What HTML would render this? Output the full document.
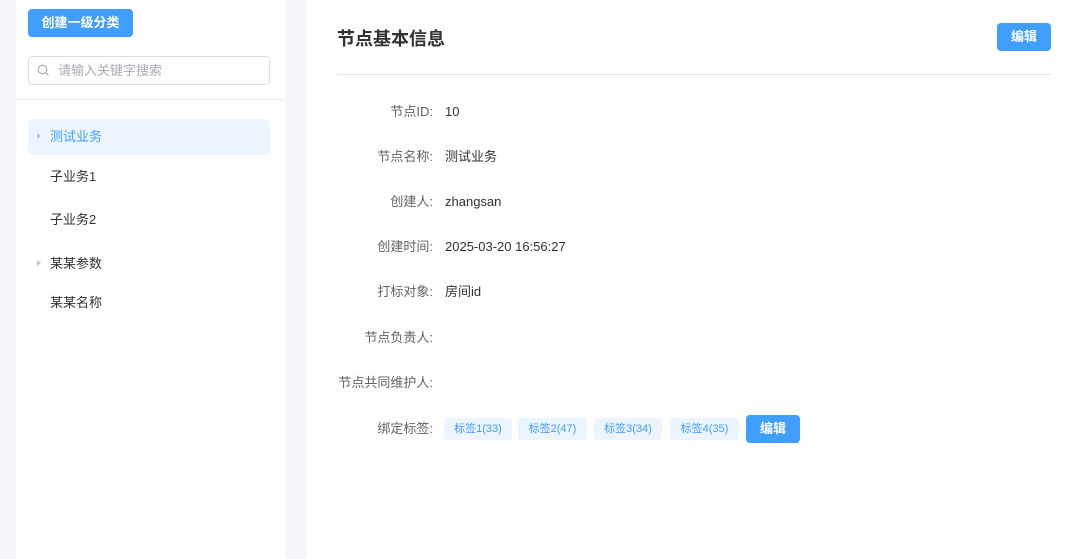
<!DOCTYPE html>
<html><head><meta charset="utf-8"><style>
*{margin:0;padding:0;box-sizing:border-box}
body{width:1080px;height:559px;overflow:hidden;background:#f5f7fa;font-family:"Liberation Sans","Noto Sans CJK SC",sans-serif;position:relative;color:#303133;line-height:18px}
.abs{position:absolute}
.left{left:16px;top:0;width:269px;height:559px;background:#fff}
.right{left:307px;top:0;width:773px;height:559px;background:#fff}
.btn{background:#409eff;color:#fff;font-size:13px;font-weight:bold;border-radius:4px;display:flex;align-items:center;justify-content:center}
.item{font-size:13px;color:#303133;left:50px}
.lab{width:120px;left:313px;text-align:right;font-size:13px;color:#606266}
.val{left:445px;font-size:13px;color:#303133}
.tag{top:418px;height:22px;background:#ecf5ff;border-radius:3px;color:#409eff;font-size:11px;display:flex;align-items:center;justify-content:center}
.tri{width:0;height:0;border-left:4px solid #c0c4cc;border-top:3.5px solid transparent;border-bottom:3.5px solid transparent}
</style></head><body>
<div class="abs left"></div>
<div class="abs right"></div>
<div class="abs btn" style="left:28px;top:9px;width:105px;height:28px">创建一级分类</div>
<div class="abs" style="left:28px;top:56px;width:242px;height:29px;border:1px solid #dcdfe6;border-radius:4px"></div>
<svg class="abs" style="left:37px;top:64px" width="13" height="13" viewBox="0 0 13 13"><circle cx="5.5" cy="5.5" r="4.3" fill="none" stroke="#a8abb2" stroke-width="1.1"/><line x1="8.7" y1="8.7" x2="11.5" y2="11.5" stroke="#a8abb2" stroke-width="1.1"/></svg>
<div class="abs" style="left:58px;top:62px;font-size:13px;color:#a8abb2">请输入关键字搜索</div>
<div class="abs" style="left:16px;top:99px;width:269px;height:1px;background:#eef0f3"></div>
<div class="abs" style="left:28px;top:119px;width:242px;height:36px;background:#ecf5ff;border-radius:6px"></div>
<div class="abs tri" style="left:37px;top:133px"></div>
<div class="abs item" style="top:128px;color:#409eff">测试业务</div>
<div class="abs item" style="top:168px">子业务1</div>
<div class="abs item" style="top:211px">子业务2</div>
<div class="abs tri" style="left:37px;top:260px"></div>
<div class="abs item" style="top:255px">某某参数</div>
<div class="abs item" style="top:294px">某某名称</div>

<div class="abs" style="left:337px;top:27px;font-size:18px;line-height:24px;font-weight:bold;color:#303133">节点基本信息</div>
<div class="abs btn" style="left:997px;top:23px;width:54px;height:28px">编辑</div>
<div class="abs" style="left:337px;top:74px;width:714px;height:1px;background:#e4e7ed"></div>

<div class="abs lab" style="top:103px">节点ID:</div><div class="abs val" style="top:103px">10</div>
<div class="abs lab" style="top:148px">节点名称:</div><div class="abs val" style="top:148px">测试业务</div>
<div class="abs lab" style="top:193px">创建人:</div><div class="abs val" style="top:193px">zhangsan</div>
<div class="abs lab" style="top:238px">创建时间:</div><div class="abs val" style="top:238px">2025-03-20 16:56:27</div>
<div class="abs lab" style="top:283px">打标对象:</div><div class="abs val" style="top:283px">房间id</div>
<div class="abs lab" style="top:329px">节点负责人:</div>
<div class="abs lab" style="top:374px">节点共同维护人:</div>
<div class="abs lab" style="top:420px">绑定标签:</div>
<div class="abs tag" style="left:444px;width:68px">标签1(33)</div>
<div class="abs tag" style="left:518px;width:69px">标签2(47)</div>
<div class="abs tag" style="left:594px;width:68px">标签3(34)</div>
<div class="abs tag" style="left:670px;width:69px">标签4(35)</div>
<div class="abs btn" style="left:746px;top:415px;width:54px;height:28px">编辑</div>
</body></html>
